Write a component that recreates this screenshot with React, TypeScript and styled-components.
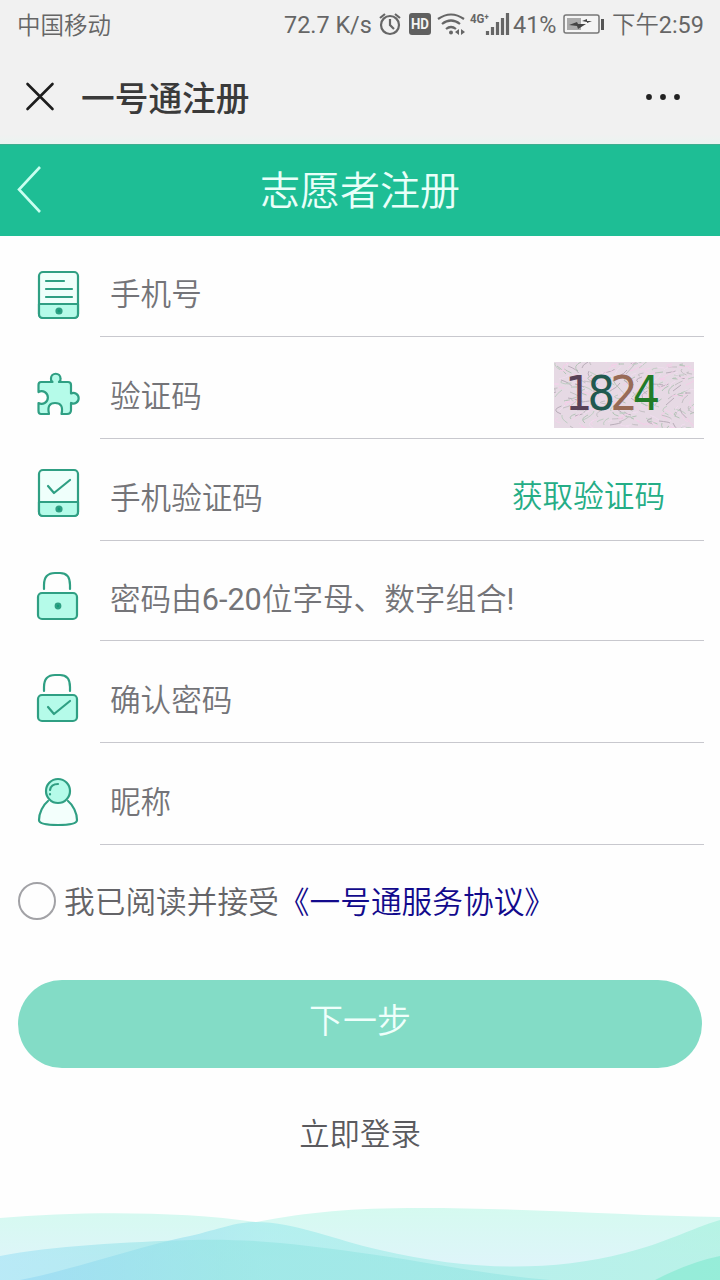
import React from "react";
import styled, { createGlobalStyle } from "styled-components";

const GlobalStyle = createGlobalStyle`
  * { box-sizing: border-box; }
  body {
    margin: 0;
    background: #fefefe;
    font-family: Roboto, "Noto Sans CJK SC", sans-serif;
    font-weight: 350;
  }
`;

const Page = styled.div`
  width: 720px;
  height: 1280px;
  display: flex;
  flex-direction: column;
  overflow: hidden;
  background: #fefefe;
`;

const StatusBar = styled.div`
  height: 50px;
  flex: none;
  display: flex;
  align-items: center;
  padding: 0 15px 0 17px;
  background: #f1f1f1;
  color: #666;
  font-size: 23.5px;
  line-height: 48px;
  white-space: nowrap;
`;

const Carrier = styled.span`
  flex: 1;
  padding-top: 1px;
`;

const StatusItem = styled.span<{ $w: number }>`
  width: ${(p) => p.$w}px;
  flex: none;
  font-size: 23.4px;
`;

const Latin = styled.span`
  font-weight: 400;
`;

const StatusIcons = styled.svg`
  width: 138px;
  height: 50px;
  flex: none;
  display: block;
`;

const BatteryIcon = styled.svg`
  width: 49px;
  height: 50px;
  flex: none;
`;

const TitleBar = styled.div`
  height: 94px;
  flex: none;
  display: flex;
  align-items: center;
  padding: 0 38px 0 25px;
  background: linear-gradient(#f1f1f1 90%, #eaf4f1);
`;

const PageTitle = styled.h1`
  flex: 1;
  margin: 5px 0 0 26px;
  font-size: 33.7px;
  line-height: 48px;
  font-weight: 500;
  color: #3a3a3a;
`;

const Header = styled.header`
  height: 92px;
  flex: none;
  display: grid;
  grid-template-columns: 60px 1fr 60px;
  align-items: center;
  background: #1ebe95;
  border-top: 1px solid #3fae90;
`;

const HeaderTitle = styled.h2`
  margin: 2px 0 0;
  text-align: center;
  color: #e9fff9;
  font-size: 40px;
  line-height: 60px;
  font-weight: 350;
`;

const Form = styled.div`
  flex: none;
  padding: 0 16px 0 36px;
`;

const Row = styled.div<{ $h: number }>`
  height: ${(p) => p.$h}px;
  display: flex;
`;

const RowIcon = styled.svg<{ $top: number }>`
  width: 44px;
  height: 50px;
  margin: ${(p) => p.$top}px 20px 0 0;
  flex: none;
  fill: none;
  stroke: #2f9f83;
  stroke-width: 2.2;
  stroke-linecap: round;
  stroke-linejoin: round;
`;

const Field = styled.div`
  flex: 1;
  display: flex;
  align-items: center;
  justify-content: space-between;
  padding: 18px 10px 0;
  border-bottom: 1px solid #c8c8ce;
  color: #747478;
  font-size: 30.6px;
  line-height: 46px;
  white-space: nowrap;
`;

const CodeButton = styled.span`
  margin: -4px 29px 0 0;
  color: #25ad86;
`;

const Captcha = styled.div`
  width: 140px;
  height: 66px;
  margin-top: -4px;
  display: grid;
  overflow: hidden;
  background: #e6d9e4;

  & > * {
    grid-area: 1 / 1;
  }
`;

const CaptchaText = styled.span`
  padding-left: 11px;
  font-family: "DejaVu Sans Condensed", "DejaVu Sans", sans-serif;
  font-stretch: condensed;
  font-size: 48px;
  line-height: 63px;
  letter-spacing: -4.9px;
  font-weight: 400;
`;

const Digit = styled.span<{ $color: string }>`
  color: ${(p) => p.$color};
`;

const Agreement = styled.div`
  height: 50px;
  margin-top: 31px;
  flex: none;
  display: flex;
  align-items: center;
  padding-left: 18px;
  font-size: 30.7px;
  line-height: 46px;
  color: #646468;
  white-space: nowrap;
`;

const Radio = styled.span`
  width: 38px;
  height: 38px;
  margin-right: 8px;
  border: 2px solid #a2a2a6;
  border-radius: 50%;
`;

const AgreementText = styled.span`
  padding-top: 3px;
`;

const AgreementLink = styled(AgreementText)`
  color: #120a8c;
`;

const NextButton = styled.button`
  height: 88px;
  margin: 54px 18px 0;
  padding: 0 0 7px;
  flex: none;
  border: 0;
  border-radius: 44px;
  background: #83dcc6;
  color: #effffb;
  font: 350 34px/50px Roboto, "Noto Sans CJK SC", sans-serif;
`;

const LoginLink = styled.div`
  margin-top: 44px;
  text-align: center;
  color: #5a5a5e;
  font-size: 30.4px;
  line-height: 46px;
`;

const Waves = styled.svg`
  width: 720px;
  height: 90px;
  margin-top: auto;
  flex: none;
  display: block;
`;

const mint = "#b5fbe9";

const PhoneBody = () => (
  <>
    <rect x="3" y="2" width="39" height="46" rx="4" fill="#effffb" />
    <path d="M3 34H42V44Q42 48 38 48H7Q3 48 3 44Z" fill={mint} />
    <circle cx="23" cy="41" r="2.5" fill="#139b79" />
  </>
);

const LockBody = () => (
  <>
    <path d="M8 18V14Q8 2 19 2H24Q34 2 34 14V18" />
    <rect x="2" y="22" width="39" height="26" rx="4" fill={mint} />
  </>
);

const fields = [
  {
    label: "手机号",
    h: 101,
    top: 34,
    icon: (
      <>
        <PhoneBody />
        <path d="M10 11H28M10 19H36M10 27H36" />
      </>
    ),
  },
  {
    label: "验证码",
    h: 102,
    top: 35,
    icon: (
      <path
        d="M2.500 13Q2.500 10 5 10H16.500Q14.500 8.500 15 6.500A4.700 4.700 0 0 1 24.500 6.500Q25 8.500 23 10H32Q35 10 35 13V21.500A5.300 5.300 0 1 1 35 31V38Q35 42 31 42H25.500Q28 31 19 31Q10.500 31 13 42H5Q2.500 42 2.500 39V31A6.300 6.300 0 1 0 2.500 20Z"
        fill={mint}
      />
    ),
  },
  {
    label: "手机验证码",
    h: 102,
    top: 29,
    icon: (
      <>
        <PhoneBody />
        <path d="M12 18L18 25L34 12" />
      </>
    ),
  },
  {
    label: (
      <>
        密码由<Latin>6-20</Latin>位字母、数字组合<Latin>!</Latin>
      </>
    ),
    h: 100,
    top: 30,
    icon: (
      <>
        <LockBody />
        <circle cx="22" cy="35" r="2.3" fill="#139b79" />
      </>
    ),
  },
  {
    label: "确认密码",
    h: 102,
    top: 32,
    icon: (
      <>
        <LockBody />
        <path d="M12 34L18 41L34 28" />
      </>
    ),
  },
  {
    label: "昵称",
    h: 102,
    top: 34,
    icon: (
      <>
        <path d="M12 24C7 28 3 36 3 43Q3 48 22 48Q41 48 41 43C41 36 37 28 32 24" fill="#f3fffc" />
        <circle cx="22" cy="14" r="12" fill={mint} />
        <path d="M14 13Q15 7 22 7M14 17V17.500" />
      </>
    ),
  },
];

/* Fixed scribbles behind the captcha digits */
const scribbles = Array.from({ length: 240 }, (_, i) => {
  const x = (i * 47 + (i % 7) * 5) % 140;
  const y = (i * 29 + (i % 5) * 3) % 66;
  const a = ((i * 13) % 23) - 11;
  const b = ((i * 17) % 19) - 9;
  return `M${x} ${y}q${a} ${b / 2} ${a / 2 + 6} ${b}`;
});
const scribbleColors = ["#b9adb9", "#b3c4b7", "#f5cde8", "#c3bfc3", "#f0dcee", "#bfcdc3", "#f3d3ea"];

export default function App() {
  return (
    <>
      <GlobalStyle />
      <Page>
        <StatusBar>
          <Carrier>中国移动</Carrier>
          <StatusItem $w={91}><Latin>72.7 K/s</Latin></StatusItem>
          <StatusIcons viewBox="375 0 138 50" fill="none" stroke="#666" strokeWidth="2.2">
            <circle cx="390" cy="25" r="9" />
            <path d="M390 19V25L394 29M380 18L385 14M400 18L395 14" />
            <rect x="409" y="13" width="22" height="22" rx="3" fill="#606060" stroke="none" />
            <text x="420" y="29" textAnchor="middle" fontSize="14" fontWeight="700" fill="#f4f4f4" stroke="none" textLength="18" lengthAdjust="spacingAndGlyphs">HD</text>
            <path d="M438 19Q451 10 464 19M442 24Q451 17 460 24M446 29Q451 25 456 29" />
            <circle cx="451" cy="32.500" r="2" fill="#666" stroke="none" />
            <path d="M459 29V35L455 32ZM461 29V35L465 32Z" fill="#666" stroke="none" />
            <text x="470" y="23" fontSize="13" fontWeight="700" fill="#666" stroke="none" textLength="19" lengthAdjust="spacingAndGlyphs">4G⁺</text>
            <path d="M487.500 31V35M492.500 27V35M497.500 22V35M502.500 18V35M507.500 13V35" strokeWidth="3.200" />
          </StatusIcons>
          <StatusItem $w={50}><Latin>41%</Latin></StatusItem>
          <BatteryIcon viewBox="563 0 49 50">
            <rect x="564" y="15" width="35" height="18" rx="2" fill="#f5f5f5" stroke="#777" strokeWidth="1.500" />
            <rect x="567" y="18" width="14" height="12" fill="#aaa" />
            <path d="M569 25L577 22L578 24L586 24L578 29L577 26ZM582 21L587 19V21H592L587 23V22Z" fill="#444" />
            <path d="M602.500 19V30" stroke="#555" strokeWidth="3" />
          </BatteryIcon>
          <StatusItem $w={93}>下午<Latin>2:59</Latin></StatusItem>
        </StatusBar>
        <TitleBar>
          <svg width="30" height="30" viewBox="0 0 30 30" stroke="#1d1d1d" strokeWidth="2.600" strokeLinecap="round">
            <path d="M2.500 2L27.500 27M27.500 2L2.500 27" />
          </svg>
          <PageTitle>一号通注册</PageTitle>
          <svg width="38" height="10" viewBox="0 0 38 10" fill="#222">
            <circle cx="5" cy="5" r="2.900" />
            <circle cx="19" cy="5" r="2.900" />
            <circle cx="33" cy="5" r="2.900" />
          </svg>
        </TitleBar>
        <Header>
          <svg width="60" height="56" viewBox="0 0 60 56" fill="none" stroke="#c9fff0" strokeWidth="2.600">
            <path d="M40 4L19 26.500L40 49" />
          </svg>
          <HeaderTitle>志愿者注册</HeaderTitle>
        </Header>
        <Form>
          {fields.map((f, i) => (
            <Row key={i} $h={f.h}>
              <RowIcon viewBox="0 0 44 50" $top={f.top}>{f.icon}</RowIcon>
              <Field>
                <span>{f.label}</span>
                {i === 1 && (
                  <Captcha>
                    <svg width="140" height="66" fill="none" strokeWidth="1">
                      {scribbles.map((d, n) => (
                        <path key={n} d={d} stroke={scribbleColors[n % 7]} />
                      ))}
                    </svg>
                    <CaptchaText>
                      <Digit $color="#594157">1</Digit>
                      <Digit $color="#21584f">8</Digit>
                      <Digit $color="#986b57">2</Digit>
                      <Digit $color="#217b27">4</Digit>
                    </CaptchaText>
                  </Captcha>
                )}
                {i === 2 && <CodeButton>获取验证码</CodeButton>}
              </Field>
            </Row>
          ))}
        </Form>
        <Agreement>
          <Radio />
          <AgreementText>我已阅读并接受</AgreementText>
          <AgreementLink>《一号通服务协议》</AgreementLink>
        </Agreement>
        <NextButton>下一步</NextButton>
        <LoginLink>立即登录</LoginLink>
        <Waves viewBox="0 -10 720 90">
          <defs>
            <linearGradient id="back" x1="0" y1="0" x2="0" y2="1">
              <stop offset="0" stopColor="#d5faf0" />
              <stop offset="0.750" stopColor="#def5f9" />
            </linearGradient>
            <linearGradient id="crest" x1="0" y1="0" x2="1" y2="0">
              <stop offset="0" stopColor="#84c8f3" />
              <stop offset="0.350" stopColor="#96e8eb" />
              <stop offset="1" stopColor="#9befd9" />
            </linearGradient>
            <linearGradient id="front" x1="0" y1="0" x2="1" y2="0">
              <stop offset="0" stopColor="#9be0f5" />
              <stop offset="0.400" stopColor="#8fe4e0" />
              <stop offset="1" stopColor="#93e4e2" />
            </linearGradient>
          </defs>
          <path d="M0 18C80 11 180 11 256 22C310 12 350 8 420 8C530 8 630 16 720 17V80H0Z" fill="url(#back)" />
          <path d="M20 80C65 72 140 46 190 36C220 29 235 22 256 22C295 22 335 40 380 50C470 71 550 72 625 53C665 43 690 29 720 20V80Z" fill="url(#crest)" fillOpacity="0.550" />
          <path d="M0 56C50 46 130 42 190 40C250 38 305 45 355 52C430 62 480 74 550 80H0Z" fill="url(#front)" fillOpacity="0.550" />
          <path d="M655 80Q690 62 720 56V80Z" fill="#7fe9cf" fillOpacity="0.600" />
        </Waves>
      </Page>
    </>
  );
}
